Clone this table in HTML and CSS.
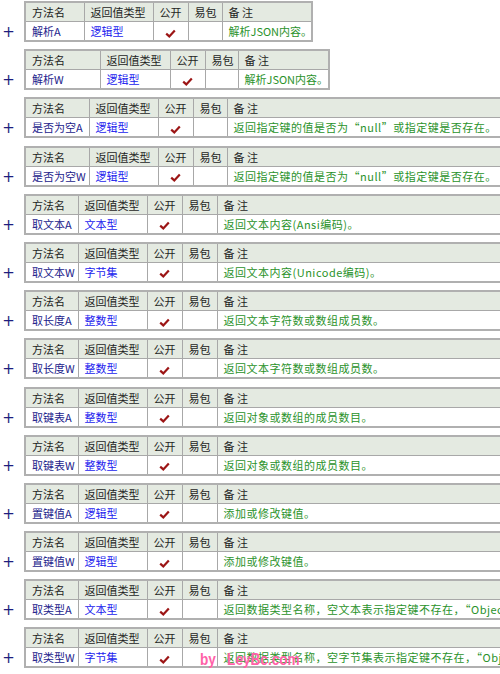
FILE: index.html
```html
<!DOCTYPE html>
<html>
<head>
<meta charset="utf-8">
<link rel="stylesheet" href="styles.css">
</head>
<body>
<div class="page">
  <div class="item">
    <span class="plus">+</span>
    <table class="api a">
      <colgroup><col class="c1"><col class="c2"><col class="c3"><col class="c4"><col class="c5"></colgroup>
      <tr class="hd"><td>方法名</td><td>返回值类型</td><td>公开</td><td>易包</td><td>备 注</td></tr>
      <tr><td class="name">解析A</td><td class="type">逻辑型</td><td class="chk"><svg width="11" height="9" viewBox="0 0 11 9"><path d="M1.2 4.6 L4.3 7.4 L9.8 1.4" stroke="#9c1515" stroke-width="2.2" fill="none"/></svg></td><td></td><td class="rem">解析JSON内容。</td></tr>
    </table>
  </div>
  <div class="item">
    <span class="plus">+</span>
    <table class="api b">
      <colgroup><col class="c1"><col class="c2"><col class="c3"><col class="c4"><col class="c5"></colgroup>
      <tr class="hd"><td>方法名</td><td>返回值类型</td><td>公开</td><td>易包</td><td>备 注</td></tr>
      <tr><td class="name">解析W</td><td class="type">逻辑型</td><td class="chk"><svg width="11" height="9" viewBox="0 0 11 9"><path d="M1.2 4.6 L4.3 7.4 L9.8 1.4" stroke="#9c1515" stroke-width="2.2" fill="none"/></svg></td><td></td><td class="rem">解析JSON内容。</td></tr>
    </table>
  </div>
  <div class="item">
    <span class="plus">+</span>
    <table class="api c">
      <colgroup><col class="c1"><col class="c2"><col class="c3"><col class="c4"><col class="c5"></colgroup>
      <tr class="hd"><td>方法名</td><td>返回值类型</td><td>公开</td><td>易包</td><td>备 注</td></tr>
      <tr><td class="name">是否为空A</td><td class="type">逻辑型</td><td class="chk"><svg width="11" height="9" viewBox="0 0 11 9"><path d="M1.2 4.6 L4.3 7.4 L9.8 1.4" stroke="#9c1515" stroke-width="2.2" fill="none"/></svg></td><td></td><td class="rem">返回指定键的值是否为“null”或指定键是否存在。</td></tr>
    </table>
  </div>
  <div class="item">
    <span class="plus">+</span>
    <table class="api c">
      <colgroup><col class="c1"><col class="c2"><col class="c3"><col class="c4"><col class="c5"></colgroup>
      <tr class="hd"><td>方法名</td><td>返回值类型</td><td>公开</td><td>易包</td><td>备 注</td></tr>
      <tr><td class="name">是否为空W</td><td class="type">逻辑型</td><td class="chk"><svg width="11" height="9" viewBox="0 0 11 9"><path d="M1.2 4.6 L4.3 7.4 L9.8 1.4" stroke="#9c1515" stroke-width="2.2" fill="none"/></svg></td><td></td><td class="rem">返回指定键的值是否为“null”或指定键是否存在。</td></tr>
    </table>
  </div>
  <div class="item">
    <span class="plus">+</span>
    <table class="api d">
      <colgroup><col class="c1"><col class="c2"><col class="c3"><col class="c4"><col class="c5"></colgroup>
      <tr class="hd"><td>方法名</td><td>返回值类型</td><td>公开</td><td>易包</td><td>备 注</td></tr>
      <tr><td class="name">取文本A</td><td class="type">文本型</td><td class="chk"><svg width="11" height="9" viewBox="0 0 11 9"><path d="M1.2 4.6 L4.3 7.4 L9.8 1.4" stroke="#9c1515" stroke-width="2.2" fill="none"/></svg></td><td></td><td class="rem">返回文本内容(Ansi编码)。</td></tr>
    </table>
  </div>
  <div class="item">
    <span class="plus">+</span>
    <table class="api d">
      <colgroup><col class="c1"><col class="c2"><col class="c3"><col class="c4"><col class="c5"></colgroup>
      <tr class="hd"><td>方法名</td><td>返回值类型</td><td>公开</td><td>易包</td><td>备 注</td></tr>
      <tr><td class="name">取文本W</td><td class="type">字节集</td><td class="chk"><svg width="11" height="9" viewBox="0 0 11 9"><path d="M1.2 4.6 L4.3 7.4 L9.8 1.4" stroke="#9c1515" stroke-width="2.2" fill="none"/></svg></td><td></td><td class="rem">返回文本内容(Unicode编码)。</td></tr>
    </table>
  </div>
  <div class="item">
    <span class="plus">+</span>
    <table class="api d">
      <colgroup><col class="c1"><col class="c2"><col class="c3"><col class="c4"><col class="c5"></colgroup>
      <tr class="hd"><td>方法名</td><td>返回值类型</td><td>公开</td><td>易包</td><td>备 注</td></tr>
      <tr><td class="name">取长度A</td><td class="type">整数型</td><td class="chk"><svg width="11" height="9" viewBox="0 0 11 9"><path d="M1.2 4.6 L4.3 7.4 L9.8 1.4" stroke="#9c1515" stroke-width="2.2" fill="none"/></svg></td><td></td><td class="rem">返回文本字符数或数组成员数。</td></tr>
    </table>
  </div>
  <div class="item">
    <span class="plus">+</span>
    <table class="api d">
      <colgroup><col class="c1"><col class="c2"><col class="c3"><col class="c4"><col class="c5"></colgroup>
      <tr class="hd"><td>方法名</td><td>返回值类型</td><td>公开</td><td>易包</td><td>备 注</td></tr>
      <tr><td class="name">取长度W</td><td class="type">整数型</td><td class="chk"><svg width="11" height="9" viewBox="0 0 11 9"><path d="M1.2 4.6 L4.3 7.4 L9.8 1.4" stroke="#9c1515" stroke-width="2.2" fill="none"/></svg></td><td></td><td class="rem">返回文本字符数或数组成员数。</td></tr>
    </table>
  </div>
  <div class="item">
    <span class="plus">+</span>
    <table class="api d">
      <colgroup><col class="c1"><col class="c2"><col class="c3"><col class="c4"><col class="c5"></colgroup>
      <tr class="hd"><td>方法名</td><td>返回值类型</td><td>公开</td><td>易包</td><td>备 注</td></tr>
      <tr><td class="name">取键表A</td><td class="type">整数型</td><td class="chk"><svg width="11" height="9" viewBox="0 0 11 9"><path d="M1.2 4.6 L4.3 7.4 L9.8 1.4" stroke="#9c1515" stroke-width="2.2" fill="none"/></svg></td><td></td><td class="rem">返回对象或数组的成员数目。</td></tr>
    </table>
  </div>
  <div class="item">
    <span class="plus">+</span>
    <table class="api d">
      <colgroup><col class="c1"><col class="c2"><col class="c3"><col class="c4"><col class="c5"></colgroup>
      <tr class="hd"><td>方法名</td><td>返回值类型</td><td>公开</td><td>易包</td><td>备 注</td></tr>
      <tr><td class="name">取键表W</td><td class="type">整数型</td><td class="chk"><svg width="11" height="9" viewBox="0 0 11 9"><path d="M1.2 4.6 L4.3 7.4 L9.8 1.4" stroke="#9c1515" stroke-width="2.2" fill="none"/></svg></td><td></td><td class="rem">返回对象或数组的成员数目。</td></tr>
    </table>
  </div>
  <div class="item">
    <span class="plus">+</span>
    <table class="api d">
      <colgroup><col class="c1"><col class="c2"><col class="c3"><col class="c4"><col class="c5"></colgroup>
      <tr class="hd"><td>方法名</td><td>返回值类型</td><td>公开</td><td>易包</td><td>备 注</td></tr>
      <tr><td class="name">置键值A</td><td class="type">逻辑型</td><td class="chk"><svg width="11" height="9" viewBox="0 0 11 9"><path d="M1.2 4.6 L4.3 7.4 L9.8 1.4" stroke="#9c1515" stroke-width="2.2" fill="none"/></svg></td><td></td><td class="rem">添加或修改键值。</td></tr>
    </table>
  </div>
  <div class="item">
    <span class="plus">+</span>
    <table class="api d">
      <colgroup><col class="c1"><col class="c2"><col class="c3"><col class="c4"><col class="c5"></colgroup>
      <tr class="hd"><td>方法名</td><td>返回值类型</td><td>公开</td><td>易包</td><td>备 注</td></tr>
      <tr><td class="name">置键值W</td><td class="type">逻辑型</td><td class="chk"><svg width="11" height="9" viewBox="0 0 11 9"><path d="M1.2 4.6 L4.3 7.4 L9.8 1.4" stroke="#9c1515" stroke-width="2.2" fill="none"/></svg></td><td></td><td class="rem">添加或修改键值。</td></tr>
    </table>
  </div>
  <div class="item">
    <span class="plus">+</span>
    <table class="api d">
      <colgroup><col class="c1"><col class="c2"><col class="c3"><col class="c4"><col class="c5"></colgroup>
      <tr class="hd"><td>方法名</td><td>返回值类型</td><td>公开</td><td>易包</td><td>备 注</td></tr>
      <tr><td class="name">取类型A</td><td class="type">文本型</td><td class="chk"><svg width="11" height="9" viewBox="0 0 11 9"><path d="M1.2 4.6 L4.3 7.4 L9.8 1.4" stroke="#9c1515" stroke-width="2.2" fill="none"/></svg></td><td></td><td class="rem">返回数据类型名称，空文本表示指定键不存在，“Object”</td></tr>
    </table>
  </div>
  <div class="item">
    <span class="plus">+</span>
    <table class="api d">
      <colgroup><col class="c1"><col class="c2"><col class="c3"><col class="c4"><col class="c5"></colgroup>
      <tr class="hd"><td>方法名</td><td>返回值类型</td><td>公开</td><td>易包</td><td>备 注</td></tr>
      <tr><td class="name">取类型W</td><td class="type">字节集</td><td class="chk"><svg width="11" height="9" viewBox="0 0 11 9"><path d="M1.2 4.6 L4.3 7.4 L9.8 1.4" stroke="#9c1515" stroke-width="2.2" fill="none"/></svg></td><td></td><td class="rem">返回数据类型名称，空字节集表示指定键不存在，“Object”</td></tr>
    </table>
  </div>
  <div class="watermark"><span>by</span><span>LeyBc.com</span></div>
</div>
</body>
</html>
```
FILE: styles.css
```css
html {
  overflow: hidden;
}
html, body {
  margin: 0;
  padding: 0;
  background: #ffffff;
}
.page {
  position: relative;
  padding: 1px 0 4px;
  font-family: "Noto Sans CJK SC", "Liberation Sans", sans-serif;
  font-size: 11px;
  color: #222;
}
.item {
  display: flex;
  align-items: flex-end;
  margin-bottom: 7.2px;
  white-space: nowrap;
}
.plus {
  flex: none;
  width: 24px;
  height: 20px;
  line-height: 20px;
  text-align: center;
  padding-right: 7px;
  box-sizing: border-box;
  font-family: "DejaVu Sans", sans-serif;
  font-size: 15px;
  color: #1e1e7e;
}
.api {
  flex: none;
  border-collapse: collapse;
  table-layout: fixed;
  border: 2px solid #b0b0b0;
}
.api td {
  border: 1px solid #a8a8a8;
  height: 18px;
  padding: 0 0 0 6px;
  line-height: 18px;
  overflow: hidden;
  white-space: nowrap;
}
.api .hd td {
  background: #e4eae1;
  color: #1e1e1e;
}
.api .name { color: #23238c; }
.api .type { color: #1a1aee; }
.api .rem { color: #2a922a; }
.c .rem, .d .rem { letter-spacing: 0.5px; }
.api .chk {
  text-align: center;
  padding: 0;
}
.api .chk svg { display: inline-block; vertical-align: middle; }

.a { width: 289px; }
.a .c1 { width: 59px; }
.a .c2 { width: 69px; }
.a .c3 { width: 35px; }
.a .c4 { width: 34px; }

.b { width: 306px; }
.b .c1 { width: 75px; }
.b .c2 { width: 70px; }
.b .c3 { width: 35px; }
.b .c4 { width: 33px; }

.c { width: 520px; }
.c .c1 { width: 64px; }
.c .c2 { width: 69px; }
.c .c3 { width: 35px; }
.c .c4 { width: 34px; }

.d { width: 560px; }
.d .c1 { width: 53px; }
.d .c2 { width: 69px; }
.d .c3 { width: 35px; }
.d .c4 { width: 35px; }

.watermark {
  position: absolute;
  left: 200px;
  top: 651px;
  display: flex;
  gap: 14px;
  font-family: "Liberation Sans", sans-serif;
  font-weight: bold;
  font-size: 17px;
  line-height: 18px;
  color: #ff62a8;
  transform: scaleX(0.8);
  transform-origin: left top;
}
```
